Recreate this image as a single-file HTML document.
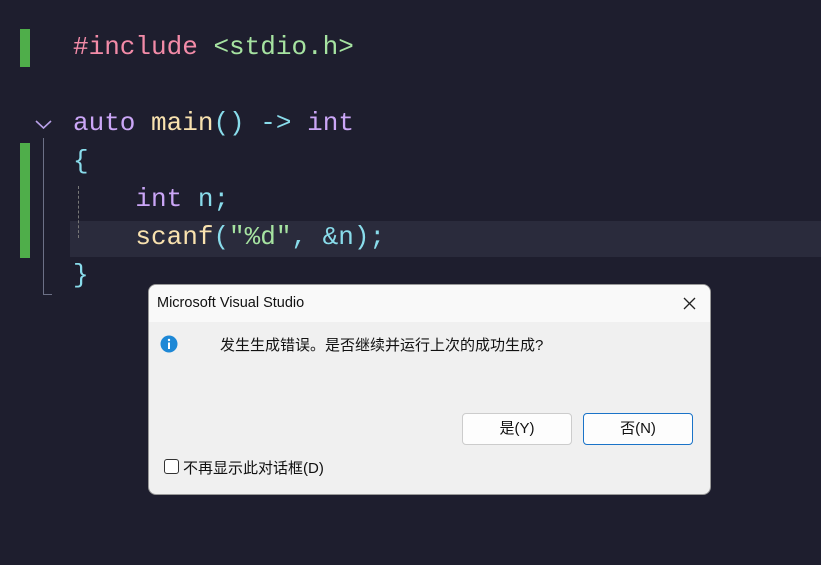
<!DOCTYPE html><html><head><meta charset="utf-8"><style>
body{margin:0;width:821px;height:565px;background:#1e1e2e;overflow:hidden;position:relative;font-family:"Liberation Sans","Noto Sans CJK SC",sans-serif}
.code{position:absolute;left:73px;font:26px "Liberation Mono",monospace;letter-spacing:0px;line-height:38px;white-space:pre}
.bar{position:absolute;left:20px;width:10px;background:#4fae4a}
.d{position:absolute;left:148px;top:284px;width:563px;height:211px;background:#f0f0f0;border:1px solid #999;border-radius:8px;overflow:hidden;box-sizing:border-box}
.t{height:37px;background:#f9f9f9;font-size:14.5px;color:#111;line-height:37px;padding-left:8px;position:relative}
.btn{position:absolute;top:128px;width:110px;height:32px;border:1px solid #ccc;border-radius:4px;background:#fdfdfd;font-size:15px;text-align:center;line-height:30px;box-sizing:border-box;color:#111}
</style></head><body>
<div class="bar" style="top:29px;height:38px"></div>
<div class="bar" style="top:143px;height:115px"></div>
<div style="position:absolute;left:70px;top:221px;right:0;height:36px;background:#2a2b3c"></div>
<div style="position:absolute;left:43px;top:138px;width:1px;height:156px;background:#6c7086"></div>
<div style="position:absolute;left:43px;top:294px;width:9px;height:1px;background:#6c7086"></div>
<div style="position:absolute;left:78px;top:186px;height:52px;border-left:1px dashed #777"></div>
<svg style="position:absolute;left:35px;top:119px" width="18" height="12"><path d="M1 2 L8.5 9 L16 2" stroke="#b8a0e8" stroke-width="1.6" fill="none"/></svg>
<div class="code" style="top:28px"><span style="color:#f38ba8">#include</span> <span style="color:#a6e3a1">&lt;stdio.h&gt;</span></div>
<div class="code" style="top:104px"><span style="color:#cba6f7">auto</span> <span style="color:#f9e2af">main</span><span style="color:#89dceb">()</span> <span style="color:#89dceb">-&gt;</span> <span style="color:#cba6f7">int</span></div>
<div class="code" style="top:142px;color:#89dceb">{</div>
<div class="code" style="top:180px">    <span style="color:#cba6f7">int</span> <span style="color:#89dceb">n;</span></div>
<div class="code" style="top:218px">    <span style="color:#f9e2af">scanf</span><span style="color:#89dceb">(</span><span style="color:#a6e3a1">"%d"</span><span style="color:#89dceb">, &amp;n);</span></div>
<div class="code" style="top:256px;color:#89dceb">}</div>
<div class="d">
<div class="t">Microsoft Visual Studio<svg style="position:absolute;right:14px;top:12px" width="13" height="13"><path d="M1 1L12 12M12 1L1 12" stroke="#222" stroke-width="1.3"/></svg></div>
<svg style="position:absolute;left:11px;top:50px" width="18" height="18"><circle cx="9" cy="9" r="8.5" fill="#1e88d6"/><rect x="8" y="7.5" width="2" height="6.5" fill="#fff"/><circle cx="9" cy="5" r="1.2" fill="#fff"/></svg>
<div style="position:absolute;left:71px;top:49px;font-size:15px;color:#111">发生生成错误。是否继续并运行上次的成功生成?</div>
<div class="btn" style="left:313px">是(Y)</div>
<div class="btn" style="left:434px;border-color:#1a73c8">否(N)</div>
<div style="position:absolute;left:15px;top:174px;width:13px;height:13px;border:1px solid #333;border-radius:3px;background:#fff"></div>
<div style="position:absolute;left:34px;top:172px;font-size:15px;color:#111">不再显示此对话框(D)</div>
</div>
</body></html>
